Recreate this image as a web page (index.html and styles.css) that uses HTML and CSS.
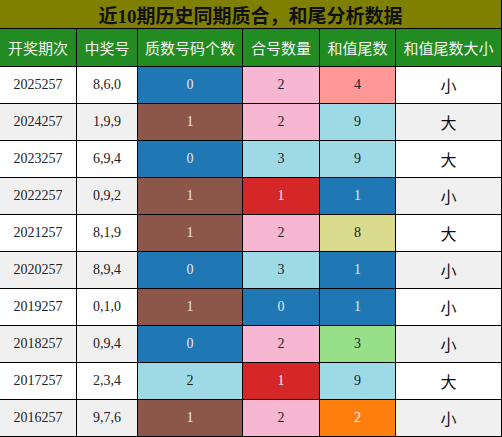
FILE: index.html
```html
<!DOCTYPE html>
<html lang="zh">
<head>
  <meta charset="UTF-8" />
  <title>近10期历史同期质合，和尾分析数据</title>
  <link rel="stylesheet" href="styles.css">
</head>
<body>
  <div class="table">
    <div class="title">近10期历史同期质合，和尾分析数据</div>

    <div class="head">开奖期次</div>
    <div class="head">中奖号</div>
    <div class="head">质数号码个数</div>
    <div class="head">合号数量</div>
    <div class="head">和值尾数</div>
    <div class="head">和值尾数大小</div>

    <div class="cell">2025257</div><div class="cell">8,6,0</div>
    <div class="cell c-blue">0</div><div class="cell c-pink">2</div><div class="cell c-salmon">4</div>
    <div class="cell size">小</div>

    <div class="cell alt">2024257</div><div class="cell alt">1,9,9</div>
    <div class="cell c-brown">1</div><div class="cell c-pink">2</div><div class="cell c-cyan">9</div>
    <div class="cell size alt">大</div>

    <div class="cell">2023257</div><div class="cell">6,9,4</div>
    <div class="cell c-blue">0</div><div class="cell c-cyan">3</div><div class="cell c-cyan">9</div>
    <div class="cell size">大</div>

    <div class="cell alt">2022257</div><div class="cell alt">0,9,2</div>
    <div class="cell c-brown">1</div><div class="cell c-red">1</div><div class="cell c-blue">1</div>
    <div class="cell size alt">小</div>

    <div class="cell">2021257</div><div class="cell">8,1,9</div>
    <div class="cell c-brown">1</div><div class="cell c-pink">2</div><div class="cell c-khaki">8</div>
    <div class="cell size">大</div>

    <div class="cell alt">2020257</div><div class="cell alt">8,9,4</div>
    <div class="cell c-blue">0</div><div class="cell c-cyan">3</div><div class="cell c-blue">1</div>
    <div class="cell size alt">小</div>

    <div class="cell">2019257</div><div class="cell">0,1,0</div>
    <div class="cell c-brown">1</div><div class="cell c-blue">0</div><div class="cell c-blue">1</div>
    <div class="cell size">小</div>

    <div class="cell alt">2018257</div><div class="cell alt">0,9,4</div>
    <div class="cell c-blue">0</div><div class="cell c-pink">2</div><div class="cell c-green">3</div>
    <div class="cell size alt">小</div>

    <div class="cell">2017257</div><div class="cell">2,3,4</div>
    <div class="cell c-cyan">2</div><div class="cell c-red">1</div><div class="cell c-cyan">9</div>
    <div class="cell size">大</div>

    <div class="cell alt">2016257</div><div class="cell alt">9,7,6</div>
    <div class="cell c-brown">1</div><div class="cell c-pink">2</div><div class="cell c-orange">2</div>
    <div class="cell size alt">小</div>
  </div>
</body>
</html>
```

FILE: styles.css
```css
body {
  margin: 0;
  font-family: "Liberation Serif", "Noto Sans CJK SC", serif;
}

/* 1px 间隙 + 黑底 = 表格线 */
.table {
  display: grid;
  grid-template-columns: 76px 60px 104px 76px 75px 105px;
  grid-template-rows: 28px 37px;
  grid-auto-rows: 36px;
  gap: 1px;
  padding: 0 1px 1px 0;
  width: 502px;
  box-sizing: border-box;
  background-color: #000;
}

.title {
  grid-column: 1 / -1;
  background-color: #808000;
  color: #111;
  font-size: 19px;
  font-weight: bold;
  display: flex;
  align-items: center;
  justify-content: center;
}

.head {
  background-color: #228b22;
  color: #f4f4f4;
  font-family: "Noto Sans CJK SC", sans-serif;
  font-size: 15px;
  display: flex;
  align-items: center;
  justify-content: center;
}

.cell {
  background-color: #fff;
  color: #222;
  font-size: 14px;
  display: flex;
  align-items: center;
  justify-content: center;
}

.cell.alt {
  background-color: #f0f0f0;
}

.size {
  font-family: "Noto Sans CJK SC", sans-serif;
  font-size: 16px;
  color: #111;
}

/* 单元格配色 */
.c-blue   { background-color: #1f77b4; color: #e8e8e8; }
.c-brown  { background-color: #8c564b; color: #e8e8e8; }
.c-red    { background-color: #d62728; color: #f0f0f0; }
.c-orange { background-color: #ff7f0e; color: #fafafa; }
.c-pink   { background-color: #f7b6d2; }
.c-cyan   { background-color: #9edae5; }
.c-salmon { background-color: #ff9896; }
.c-khaki  { background-color: #dbdb8d; }
.c-green  { background-color: #98df8a; }
```
